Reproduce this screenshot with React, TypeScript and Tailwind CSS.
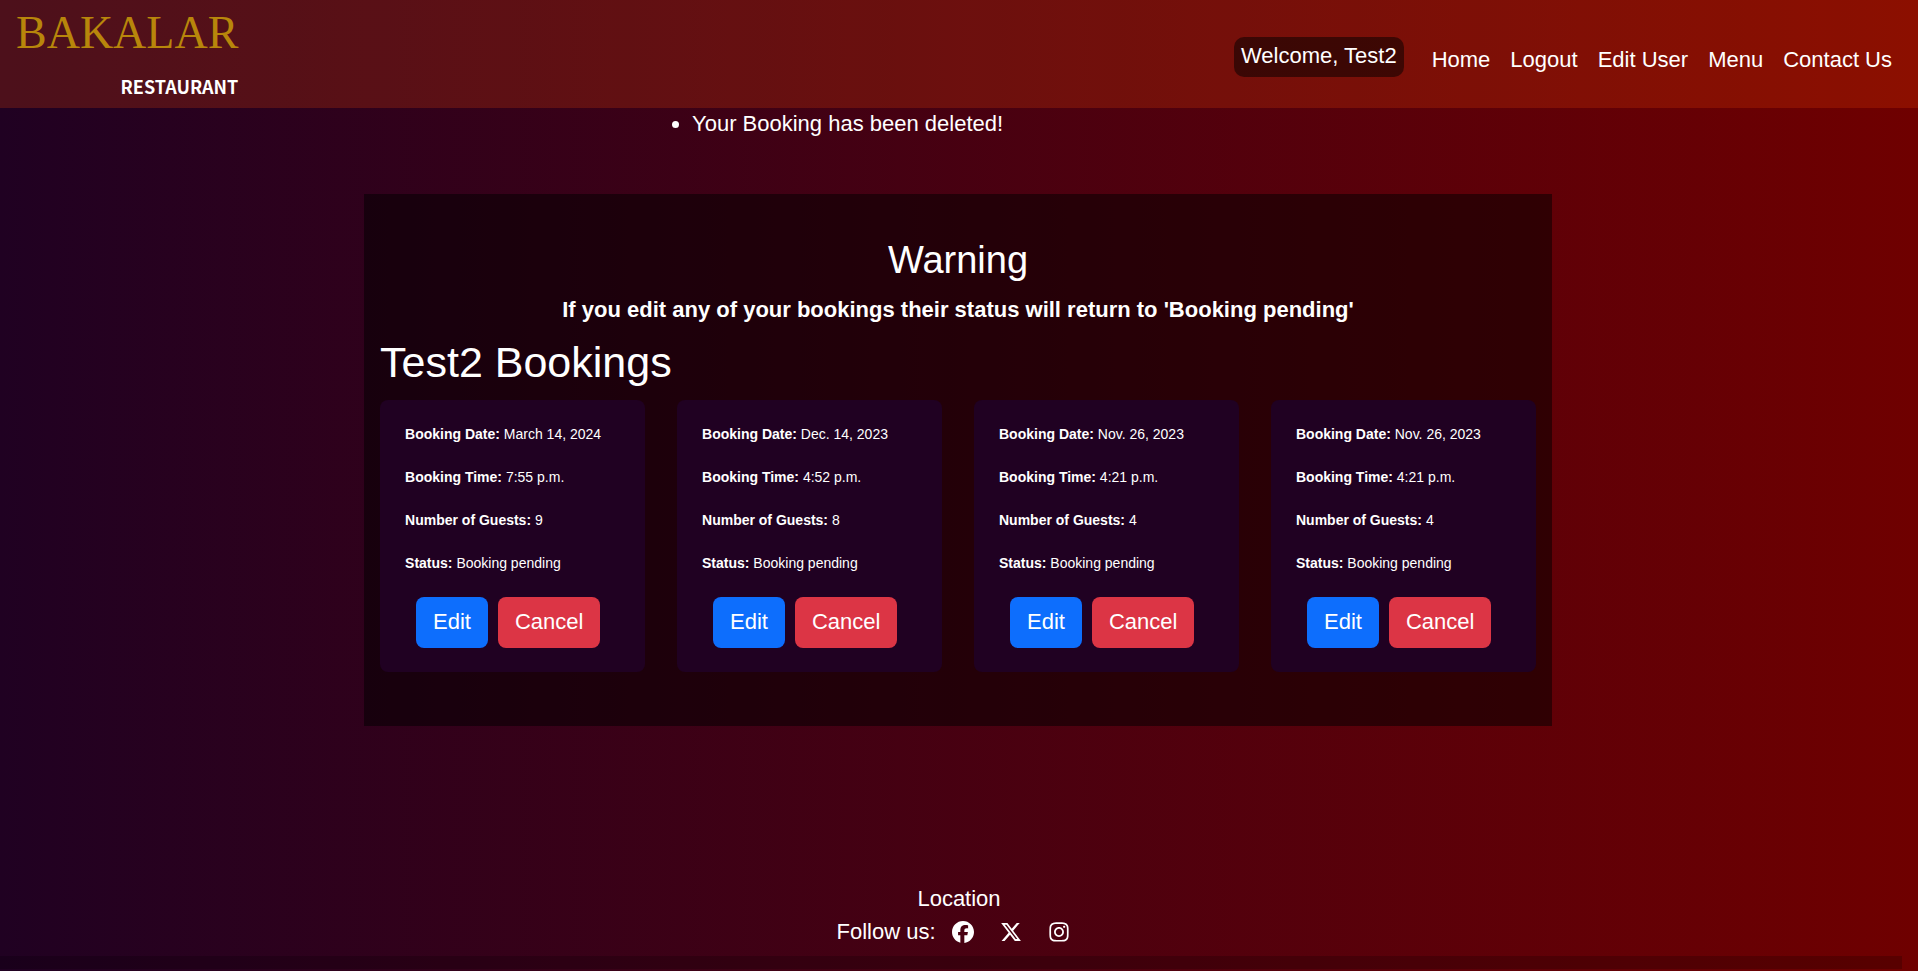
import { FaFacebook, FaInstagram, FaXTwitter } from "react-icons/fa6";

const navLinks = ["Home", "Logout", "Edit User", "Menu", "Contact Us"];

const bookings = [
  { id: 1, date: "March 14, 2024", time: "7:55 p.m.", guests: 9 },
  { id: 2, date: "Dec. 14, 2023", time: "4:52 p.m.", guests: 8 },
  { id: 3, date: "Nov. 26, 2023", time: "4:21 p.m.", guests: 4 },
  { id: 4, date: "Nov. 26, 2023", time: "4:21 p.m.", guests: 4 },
];

function Header() {
  return (
    <header className="flex h-[108px] items-center justify-between bg-[#ff4a00]/20 pr-4 pl-4">
      <a href="#" className="flex h-full flex-col items-end">
        <span className="font-['Liberation_Serif',serif] text-[46px] leading-[66px] text-[#b8860b]">
          BAKALAR
        </span>
        <span className="font-['Noto_Sans_CJK_SC',sans-serif] text-[18px] leading-[40px] font-bold">
          RESTAURANT
        </span>
      </a>
      <nav className="flex items-start pt-2">
        <p className="mr-[18px] rounded-[10px] bg-black/50 px-[7px] pt-0.5 pb-1 leading-[34px]">
          Welcome, Test2
        </p>
        <ul className="flex pt-1">
          {navLinks.map((label) => (
            <li key={label}>
              <a href="#" className="block px-2.5 leading-[38px]">
                {label}
              </a>
            </li>
          ))}
        </ul>
      </nav>
    </header>
  );
}

function BookingCard({ booking }: { booking: (typeof bookings)[number] }) {
  const rows = [
    ["Booking Date:", booking.date],
    ["Booking Time:", booking.time],
    ["Number of Guests:", booking.guests],
    ["Status:", "Booking pending"],
  ];
  return (
    <article className="rounded-lg bg-[#200122] px-[25px] py-6">
      <div className="flex flex-col gap-[22px] text-[14px] leading-[21px]">
        {rows.map(([label, value]) => (
          <p key={label}>
            <strong>{label}</strong> {value}
          </p>
        ))}
      </div>
      <div className="mt-[23px] flex gap-2.5 pl-[11px]">
        <button className="rounded-lg bg-[#0d6efd] px-[17px] pt-2 pb-2.5 leading-[33px]">Edit</button>
        <button className="rounded-lg bg-[#dc3545] px-[17px] pt-2 pb-2.5 leading-[33px]">Cancel</button>
      </div>
    </article>
  );
}

export default function App() {
  return (
    <div className="flex min-h-screen flex-col bg-linear-to-r/srgb from-[#200122] to-[#6f0000] font-['Liberation_Sans',Arial,sans-serif] text-[22px] leading-[33px] text-white">
      <Header />
      <main className="flex-1 pr-0.5">
        <ul className="mx-auto w-[600px] list-disc pl-[34px] leading-[31px]">
          <li>Your Booking has been deleted!</li>
        </ul>
        <section className="mx-auto mt-[55px] w-[62%] bg-black/50 px-4 pt-[43px] pb-[54px]">
          <h2 className="text-center text-[38px] leading-[46px]">Warning</h2>
          <p className="mt-2.5 text-center font-bold">
            If you edit any of your bookings their status will return to 'Booking pending'
          </p>
          <h1 className="mt-[9px] text-[43px] leading-[54px]">Test2 Bookings</h1>
          <div className="mt-[11px] grid grid-cols-4 gap-8">
            {bookings.map((booking) => (
              <BookingCard key={booking.id} booking={booking} />
            ))}
          </div>
        </section>
      </main>
      <footer>
        <div className="flex flex-col items-center pb-2">
          <a href="#">Location</a>
          <div className="flex items-center pr-3">
            <span className="mr-4">Follow us:</span>
            <div className="flex items-center gap-[26px]">
              <a href="#" aria-label="Facebook"><FaFacebook /></a>
              <a href="#" aria-label="X"><FaXTwitter /></a>
              <a href="#" aria-label="Instagram"><FaInstagram /></a>
            </div>
          </div>
        </div>
        <div className="mr-4 mb-0.5 h-[13px] bg-black/20" />
      </footer>
    </div>
  );
}
